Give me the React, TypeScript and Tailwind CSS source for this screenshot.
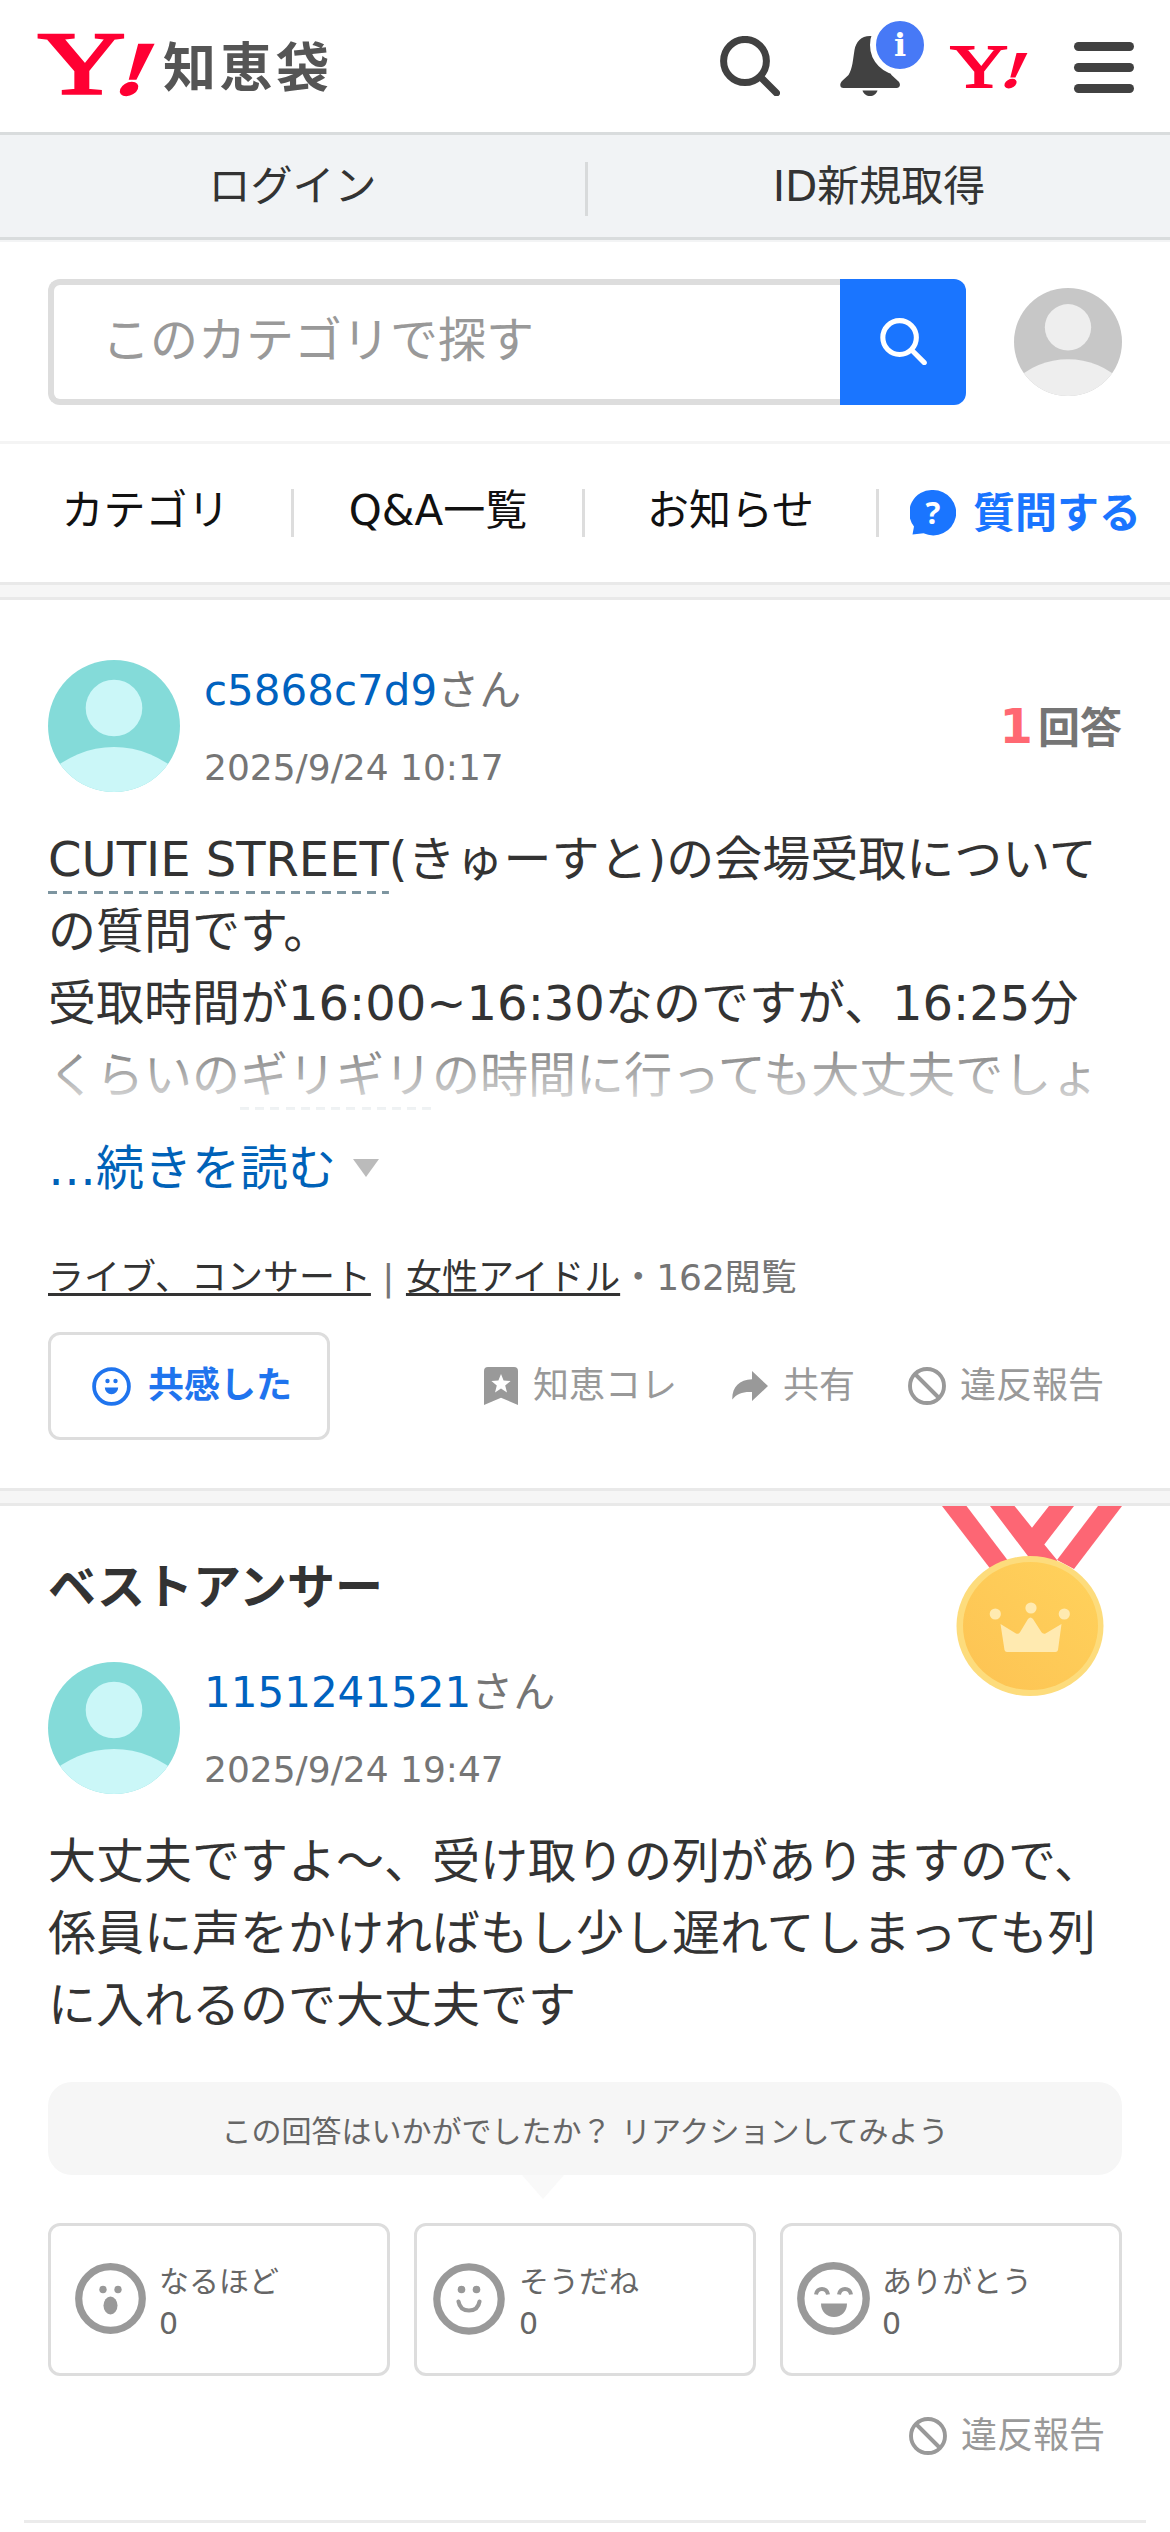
import { useState, type ReactNode } from 'react';
import clsx from 'clsx';

const reactions = [
  { id: 'naruhodo', label: 'なるほど', count: 0, icon: <SurprisedFace />, pad: 'pl-[24px] gap-[13px]' },
  { id: 'soudane', label: 'そうだね', count: 0, icon: <SmileFace />, pad: 'pl-[16px] gap-[14px]' },
  { id: 'arigatou', label: 'ありがとう', count: 0, icon: <LaughFace />, pad: 'pl-[14px] gap-[12px]' },
];

function YahooMark({ className }: { className?: string }) {
  return (
    <svg
      className={className}
      viewBox="0 0 118 62"
      preserveAspectRatio="none"
      fill="#ff0033"
      stroke="#ff0033"
      fontFamily="'Liberation Serif', serif"
      aria-label="Yahoo! JAPAN"
    >
      <g transform="translate(-1 60) scale(1.36 1)">
        <text x="0" y="0" fontSize="89" strokeWidth="2.6">
          Y
        </text>
      </g>
      <g transform="translate(73 60.500) skewX(-21) scale(.95 .78)">
        <text x="0" y="0" fontSize="96" fontWeight="bold" strokeWidth="3">
          !
        </text>
      </g>
    </svg>
  );
}

function SearchIcon({ className, strokeWidth }: { className?: string; strokeWidth: number }) {
  return (
    <svg className={className} viewBox="0 0 60 60" fill="none" stroke="currentColor" strokeWidth={strokeWidth} strokeLinecap="round">
      <ellipse cx="25" cy="25" rx="21.4" ry="21.6" />
      <path d="M41 41.5 56.5 57" />
    </svg>
  );
}

function BellIcon() {
  return (
    <svg className="h-[60px] w-[60px]" viewBox="0 0 60 60" fill="#414141">
      <path d="M30 0c-9 0-14 6-15.500 14-1.500 9-2 19-6 25L2 45c-2.500 2.500-2.500 7 1.500 7h53c4 0 4.500-4.500 1.500-7l-6.500-6C47.500 33 46.500 23 45.500 14 44 6 39 0 30 0Z" />
      <path d="M22.500 54.500h15c-1 3.500-4 5.500-7.500 5.500s-6.500-2-7.500-5.500Z" />
    </svg>
  );
}

function Avatar({ className, bg, fg }: { className: string; bg: string; fg: string }) {
  return (
    <span className={clsx('block shrink-0 overflow-hidden rounded-full', className)}>
      <svg className="h-full w-full" viewBox="0 0 132 132">
        <rect width="132" height="132" fill={bg} />
        <circle cx="66" cy="48" r="28.300" fill={fg} />
        <circle cx="66" cy="181" r="94" fill={fg} />
      </svg>
    </span>
  );
}

function QuestionBubbleIcon() {
  return (
    <svg className="h-[46px] w-[46px]" viewBox="0 0 46 46">
      <path
        d="M23 0a23 22.700 0 1 1-9.500 43.300L2.500 44.500 4 36.500A23 22.700 0 0 1 23 0Z"
        fill="#1a75ff"
      />
      <text x="23" y="33.500" textAnchor="middle" fontSize="31" fontWeight="bold" fill="#fff" fontFamily="'Noto Sans', sans-serif">
        ?
      </text>
    </svg>
  );
}

function EmpathyIcon() {
  return (
    <svg className="h-[39px] w-[39px]" viewBox="0 0 39 39" fill="#1f74ee">
      <circle cx="19.500" cy="19.500" r="17.400" fill="none" stroke="#1f74ee" strokeWidth="3.800" />
      <circle cx="15.500" cy="14" r="2.200" />
      <circle cx="23.500" cy="14" r="2.200" />
      <path d="M12.800 20.500h13.400a6.700 6.700 0 0 1-13.400 0Z" />
    </svg>
  );
}

function BookmarkIcon() {
  return (
    <svg className="h-[38px] w-[34px]" viewBox="0 0 34 38" fill="#999">
      <path d="M4 0h26a4 4 0 0 1 4 4v34l-17-7.300L0 38V4a4 4 0 0 1 4-4Z" />
      <path d="m17 7 2.600 6.600 7 .4-5.400 4.500 1.800 6.900-6-3.900-6 3.900 1.800-6.900L7.400 14l7-.4Z" fill="#fff" />
    </svg>
  );
}

function ShareIcon() {
  return (
    <svg className="h-[30px] w-[36px]" viewBox="0 0 36 30" fill="#999">
      <path d="M20 0 36 15 20 30V21C11 20.500 5 22.500.300 28.500-.2 17 7 8.500 20 8.300Z" />
    </svg>
  );
}

function BanIcon() {
  return (
    <svg className="h-[38px] w-[38px]" viewBox="0 0 38 38" fill="none" stroke="#999" strokeWidth="3.900">
      <circle cx="19" cy="19" r="17" />
      <path d="m7.500 7.500 23 23" />
    </svg>
  );
}

function SurprisedFace() {
  return (
    <svg className="h-[71px] w-[71px]" viewBox="0 0 71 71" fill="#999">
      <circle cx="35.500" cy="35.500" r="31.800" fill="none" stroke="#999" strokeWidth="7.200" />
      <circle cx="28" cy="26.500" r="3.700" />
      <circle cx="43" cy="26.500" r="3.700" />
      <ellipse cx="35.500" cy="42.500" rx="7" ry="9" />
    </svg>
  );
}

function SmileFace() {
  return (
    <svg className="h-[72px] w-[72px]" viewBox="0 0 72 72" fill="#999">
      <circle cx="36" cy="36" r="32.200" fill="none" stroke="#999" strokeWidth="7.200" />
      <circle cx="28.500" cy="26.500" r="3.800" />
      <circle cx="43.500" cy="26.500" r="3.800" />
      <path d="M25.500 38.500c1 6 5 9 10.500 9s9.500-3 10.500-9" fill="none" stroke="#999" strokeWidth="4.200" strokeLinecap="round" />
    </svg>
  );
}

function LaughFace() {
  return (
    <svg className="h-[73px] w-[73px]" viewBox="0 0 73 73" fill="#999">
      <circle cx="36.500" cy="36.500" r="32.700" fill="none" stroke="#999" strokeWidth="7.400" />
      <path
        d="M19 32.500c.8-7.500 11.200-7.500 12 0M42 32.500c.8-7.500 11.200-7.500 12 0"
        fill="none"
        stroke="#999"
        strokeWidth="4"
      />
      <path d="M24 41.500h26c0 8-5.500 13.500-13 13.500s-13-5.500-13-13.500Z" />
    </svg>
  );
}

function Medal() {
  return (
    <svg className="h-[190px] w-[180px]" viewBox="0 0 180 190">
      <defs>
        <linearGradient id="gold" x1="1" y1="0" x2="0" y2="1">
          <stop offset="0" stopColor="#ffd25c" />
          <stop offset="1" stopColor="#fdc353" />
        </linearGradient>
      </defs>
      <g fill="#fd6674">
        <path d="M0 0h24.500l44 58-20 5Z" />
        <path d="M156 0h24l-48 63-17-9Z" />
        <path d="M48 0h24.500L90 21.700 107 0h25l-29.700 38.500L115 54v8H95Z" />
      </g>
      <ellipse cx="88" cy="120" rx="73.500" ry="70" fill="#fddc7c" />
      <ellipse cx="88.500" cy="120" rx="67.500" ry="64" fill="url(#gold)" />
      <g fill="#ffeab0">
        <circle cx="53.300" cy="108" r="5.600" />
        <circle cx="89" cy="102" r="5.600" />
        <circle cx="122.300" cy="108" r="5.600" />
        <path d="M58.500 118 74 127.500q2.500 1 4-1.200l8-13.300q2.500-3 5 0l8.500 13.300q1.500 2 4 1.200L119.500 118l-3.500 26q-.5 2-2.500 2H65q-2 0-2.500-2Z" />
      </g>
    </svg>
  );
}

function SectionBand() {
  return <div className="h-[18px] border-y-[3px] border-[#e9e9e9] bg-[#f6f6f6]" />;
}

// Keyword link with a dashed underline, 9px dash and 6px gap
function Keyword({ children }: { children: ReactNode }) {
  return (
    <a className="bg-[repeating-linear-gradient(90deg,#7d95a0_0_9px,transparent_9px_15.2px)] bg-[length:100%_3px] bg-bottom bg-no-repeat pb-[7px]">
      {children}
    </a>
  );
}

function UserInfo({ name, date, children }: { name: string; date: string; children?: ReactNode }) {
  return (
    <div className="flex h-[132px] items-start">
      <Avatar className="h-[132px] w-[132px]" bg="#84dbd9" fg="#cbf7f8" />
      <div className="mt-px ml-6 flex-1">
        <p className="text-[42px] leading-[60px] text-[#757575]">
          <a className="text-[#0062bf]">{name}</a>さん
        </p>
        <p className="mt-5 text-[36px] leading-[54px] text-[#757575]">{date}</p>
      </div>
      {children}
    </div>
  );
}

function Action({ icon, label, className }: { icon: ReactNode; label: string; className?: string }) {
  return (
    <button className={clsx('flex items-center text-[36px] leading-[54px] text-[#999]', className)}>
      {icon}
      {label}
    </button>
  );
}

function Header() {
  return (
    <header className="flex h-[132px] items-start bg-white pl-[39px]">
      <a className="flex">
        <YahooMark className="mt-[33px] h-[62px] w-[118px] overflow-visible" />
        <span className="mt-[34px] ml-[6px] text-[53px] leading-[70px] font-bold tracking-[3.500px] text-[#555]">知恵袋</span>
      </a>
      <div className="mt-9 ml-auto flex pr-9">
        <SearchIcon className="h-[60px] w-[60px] text-[#414141]" strokeWidth={7} />
        <div className="relative ml-[60px]">
          <BellIcon />
          <span className="absolute -top-[21px] left-[30px] flex h-[60px] w-[60px] items-center justify-center rounded-full border-[6px] border-white bg-[#4779f6] font-['DejaVu_Serif',serif] text-[32px] leading-none font-bold text-white">
            i
          </span>
        </div>
        <YahooMark className="mt-[10px] ml-[51px] h-[42px] w-[78px] overflow-visible" />
        <button className="mt-1.5 ml-[45px] flex h-[51px] w-[60px] flex-col justify-between">
          <span className="h-[9px] w-full rounded-full bg-[#414141]" />
          <span className="h-[9px] w-full rounded-full bg-[#414141]" />
          <span className="h-[9px] w-full rounded-full bg-[#414141]" />
        </button>
      </div>
    </header>
  );
}

function LoginBar() {
  return (
    <div className="flex h-[108px] items-center border-y-[3px] border-[#d9dcdd] bg-[#f1f3f5] text-[42px] leading-[60px] text-[#333]">
      <a className="w-[585px] pt-[2px] text-center">ログイン</a>
      <span className="mt-1.5 h-[54px] w-[3px] bg-[#d8dadb]" />
      <a className="flex-1 pt-[2px] text-center">ID新規取得</a>
    </div>
  );
}

function SearchBar() {
  return (
    <div className="flex h-[204px] items-center border-t-2 border-b-[3px] border-t-[#f3f4f5] border-b-[#f4f4f4] px-12">
      <div className="flex h-[126px] w-[792px] items-center rounded-l-[12px] border-y-[6px] border-l-[6px] border-[#ddd] pl-[48px]">
        <span className="pb-[3px] text-[48px] leading-[60px] text-[#999]">このカテゴリで探す</span>
      </div>
      <button className="flex h-[126px] w-[126px] items-center justify-center rounded-r-[12px] bg-[#1a75ff] text-white">
        <SearchIcon className="h-[47px] w-[47px]" strokeWidth={6.5} />
      </button>
      <Avatar className="ml-12 h-[108px] w-[108px]" bg="#c7c7c7" fg="#eee" />
    </div>
  );
}

function GlobalNav() {
  return (
    <nav className="flex h-[138px] items-center text-[42px] leading-[60px] text-[#111]">
      <a className="w-[291px] pb-[5px] text-center">カテゴリ</a>
      <span className="h-12 w-[3px] bg-[#ddd]" />
      <a className="w-[288px] pb-[5px] text-center">Q&amp;A一覧</a>
      <span className="h-12 w-[3px] bg-[#ddd]" />
      <a className="w-[291px] pb-[5px] text-center">お知らせ</a>
      <span className="h-12 w-[3px] bg-[#ddd]" />
      <a className="flex items-center gap-[17px] pl-[31px] font-bold text-[#1a75ff]">
        <QuestionBubbleIcon />
        <span className="pt-[2px]">質問する</span>
      </a>
    </nav>
  );
}

function Question() {
  const [expanded, setExpanded] = useState(false);

  return (
    <section className="px-12 pt-[60px] pb-12">
      <UserInfo name="c5868c7d9" date="2025/9/24 10:17">
        <p className="mt-[36px] flex items-baseline gap-[5px] leading-[60px] font-bold">
          <span className="text-[48px] text-[#ff6872]">1</span>
          <span className="text-[42px] text-[#757575]">回答</span>
        </p>
      </UserInfo>

      <div className="relative mt-[31px] h-[288px] overflow-hidden text-[48px] leading-[72px] text-[#333]">
        <p>
          <Keyword>CUTIE STREET</Keyword>
          (きゅーすと)の会場受取について
          <br />
          の質問です。
          <br />
          受取時間が16:00~16:30なのですが、16:25分
          <br />
          くらいの<Keyword>ギリギリ</Keyword>
          の時間に行っても大丈夫でしょ
        </p>
        {!expanded && (
          <div className="absolute inset-x-0 bottom-0 h-[72px] bg-linear-to-b from-white/30 to-white/90" />
        )}
      </div>

      <button
        className="mt-[21px] flex h-[72px] items-center text-[48px] leading-[72px] text-[#0062b8]"
        onClick={() => setExpanded(true)}
      >
        …続きを読む
        <span className="ml-[17px] border-x-[13.5px] border-t-[18px] border-x-transparent border-t-[#bbb]" />
      </button>

      <p className="mt-[47px] text-[36px] leading-[54px] text-[#757575]">
        <a className="text-[#333] underline decoration-3 underline-offset-[3px] [text-decoration-skip-ink:none]">ライブ、コンサート</a>
        {' | '}
        <a className="text-[#333] underline decoration-3 underline-offset-[3px] [text-decoration-skip-ink:none]">女性アイドル</a>
        ・162閲覧
      </p>

      <div className="mt-[27px] flex h-[108px] items-center">
        <button className="flex h-full w-[282px] items-center gap-[17px] rounded-[12px] border-[3px] border-[#ddd] pl-[41px] text-[36px] leading-[54px] font-bold text-[#1f74ee]">
          <EmpathyIcon />
          共感した
        </button>
        <Action className="ml-[154px] gap-[15px]" icon={<BookmarkIcon />} label="知恵コレ" />
        <Action className="ml-[55px] gap-[15px]" icon={<ShareIcon />} label="共有" />
        <Action className="ml-[53px] gap-[14px]" icon={<BanIcon />} label="違反報告" />
      </div>
    </section>
  );
}

function BestAnswer() {
  return (
    <section className="relative px-12 pt-[45px]">
      <div className="absolute top-0 right-12">
        <Medal />
      </div>
      <h2 className="text-[48px] leading-[72px] font-bold text-[#333]">ベストアンサー</h2>
      <div className="mt-[39px]">
        <UserInfo name="1151241521" date="2025/9/24 19:47" />
      </div>
      <p className="mt-[31px] text-[48px] leading-[72px] text-[#333]">
        大丈夫ですよ〜、受け取りの列がありますので、
        <br />
        係員に声をかければもし少し遅れてしまっても列
        <br />
        に入れるので大丈夫です
      </p>

      <div className="relative mt-[41px] flex h-[93px] items-center justify-center rounded-[24px] bg-[#f6f6f6] pt-[6px] text-[30px] leading-[42px] text-[#666]">
        この回答はいかがでしたか？ リアクションしてみよう
        <span className="absolute top-full left-[474px] border-x-[21px] border-t-[24px] border-x-transparent border-t-[#f9f9f9]" />
      </div>

      <div className="mt-12 grid grid-cols-3 gap-6">
        {reactions.map((reaction) => (
          <button
            key={reaction.id}
            className={clsx('flex h-[153px] items-center rounded-[12px] border-[3px] border-[#ddd] pb-[2px]', reaction.pad)}
          >
            {reaction.icon}
            <span className="pt-[8px] text-left text-[30px] leading-[42px] text-[#666]">
              {reaction.label}
              <br />
              {reaction.count}
            </span>
          </button>
        ))}
      </div>

      <div className="mt-[33px] flex justify-end pr-[17px]">
        <Action className="gap-[14px]" icon={<BanIcon />} label="違反報告" />
      </div>
    </section>
  );
}

export default function App() {
  return (
    <div className="h-[2532px] w-[1170px] overflow-hidden bg-white font-['DejaVu_Sans','Noto_Sans_CJK_JP',sans-serif]">
      <Header />
      <LoginBar />
      <SearchBar />
      <GlobalNav />
      <SectionBand />
      <Question />
      <SectionBand />
      <BestAnswer />
      <hr className="mx-6 mt-[57px] border-t-[3px] border-[#ebebeb]" />
    </div>
  );
}
